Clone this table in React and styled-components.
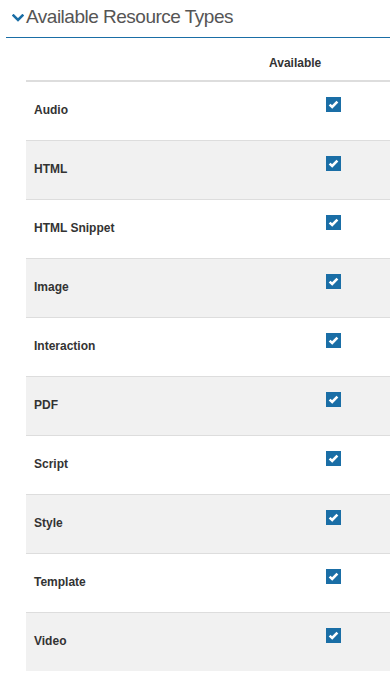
import styled, { createGlobalStyle } from 'styled-components';

const GlobalStyle = createGlobalStyle`
    body{
        margin: 0;
        background: #FFFFFF;
        font-family: 'Liberation Sans', Arial, sans-serif;
        overflow-x: hidden;
    }
`

const types = ['Audio', 'HTML', 'HTML Snippet', 'Image', 'Interaction', 'PDF', 'Script', 'Style', 'Template', 'Video'];

function Chevron(){
    return (
        <svg width="12" height="8" viewBox="0 0 12 8">
            <polyline points="1.6,1.6 6,6 10.4,1.6" fill="none" stroke="#1a6ea6" strokeWidth="2.6" strokeLinecap="square" />
        </svg>
    )
}

function CheckBox(){
    return (
        <Check>
            <svg width="15" height="15" viewBox="0 0 15 15">
                <polyline points="3.6,7.6 6.2,10 11.4,4.6" fill="none" stroke="#FFFFFF" strokeWidth="2.6" />
            </svg>
        </Check>
    )
}

function App(){
    return (
        <Main>
            <GlobalStyle />
            <Title>
                <Chevron />
                <h1>Available Resource Types</h1>
            </Title>
            <Table>
                <HeadRow>
                    <span></span>
                    <span>Available</span>
                </HeadRow>
                {types.map((name, i) => (
                    <Row key={name} $striped={i % 2 === 1} $first={i === 0}>
                        <Label>{name}</Label>
                        <CheckCell><CheckBox /></CheckCell>
                    </Row>
                ))}
            </Table>
        </Main>
    )
}

const Main = styled.main`
    display: flex;
    flex-direction: column;
    padding-left: 6px;
`

const Title = styled.header`
    display: flex;
    align-items: flex-start;
    gap: 2px;
    padding: 7px 0 0 6px;
    height: 38px;
    box-sizing: border-box;
    border-bottom: 1px solid #1a6ea6;
    margin-bottom: 9px;

    svg{
        margin-top: 7px;
    }

    h1{
        margin: 0;
        font-family: 'Liberation Sans', Arial, sans-serif;
        font-weight: 400;
        font-size: 19px;
        letter-spacing: -0.5px;
        line-height: 20px;
        color: #555555;
    }
`

const Table = styled.section`
    display: flex;
    flex-direction: column;
    margin-left: 20px;
`

const HeadRow = styled.div`
    display: grid;
    grid-template-columns: 235px 1fr;
    padding: 8px 0;
    border-bottom: 2px solid #dddddd;

    span{
        padding-left: 8px;
        font-size: 12px;
        font-weight: 700;
        line-height: 17px;
        color: #333333;
    }
`

const Row = styled.div`
    display: grid;
    grid-template-columns: 235px 1fr;
    height: 58px;
    border-top: ${props => props.$first ? 'none' : '1px solid #dddddd'};
    background: ${props => props.$striped ? '#f1f1f1' : '#FFFFFF'};
`

const Label = styled.span`
    align-self: center;
    padding: 0 0 2px 8px;
    font-size: 12px;
    font-weight: 700;
    color: #333333;
`

const CheckCell = styled.div`
    padding: 15px 0 0 65px;
`

const Check = styled.div`
    width: 15px;
    height: 15px;
    background: #1a6ea6;

    svg{
        display: block;
    }
`

export default App;
